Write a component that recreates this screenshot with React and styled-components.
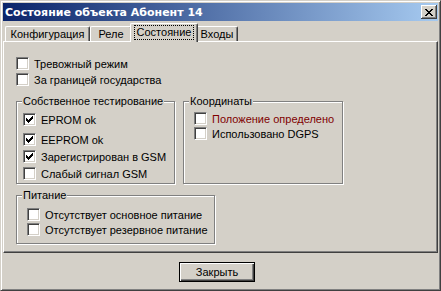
import React from 'react'
import styled, { createGlobalStyle } from 'styled-components'

const GlobalStyle = createGlobalStyle`
  html, body {
    margin: 0;
    padding: 0;
    background: #d4d0c8;
  }
  body {
    font-family: "Liberation Sans", Arial, sans-serif;
    font-size: 11px;
    color: #000;
  }
`

const Window = styled.div`
  width: 441px;
  height: 291px;
  box-sizing: border-box;
  background: #d4d0c8;
  border: 1px solid;
  border-color: #d4d0c8 #404040 #404040 #d4d0c8;
  box-shadow: inset 1px 1px #fff, inset -1px -1px #808080;
  padding: 2px;
  display: flex;
  flex-direction: column;
`

const TitleBar = styled.div`
  height: 18px;
  flex-shrink: 0;
  display: flex;
  align-items: center;
  justify-content: space-between;
  padding: 0 1px 0 2px;
  background: linear-gradient(to right, #0a246a, #a6caf0);
  color: #fff;
  font-family: "DejaVu Sans", "Liberation Sans", sans-serif;
  font-weight: bold;
  font-size: 11px;
`

const CloseBtn = styled.div`
  width: 16px;
  height: 14px;
  box-sizing: border-box;
  background: #d4d0c8;
  box-shadow: inset -1px -1px #404040, inset 1px 1px #fff, inset -2px -2px #808080;
  display: flex;
  align-items: center;
  justify-content: center;
`

const TabRow = styled.div`
  margin-top: 2px;
  height: 18px;
  flex-shrink: 0;
  display: flex;
  align-items: flex-end;
  padding-left: 2px;
`

const Tab = styled.div`
  position: relative;
  box-sizing: border-box;
  width: ${p => p.$w}px;
  height: ${p => (p.$active ? 19 : 15)}px;
  margin: ${p => (p.$active ? '0 -2px -1px -2px' : '0')};
  z-index: ${p => (p.$active ? 2 : 1)};
  background: #d4d0c8;
  border-left: 1px solid #fff;
  border-top: 1px solid #fff;
  border-right: 1px solid #404040;
  border-radius: 2px 2px 0 0;
  box-shadow: inset -1px 0 #808080;
  display: flex;
  align-items: ${p => (p.$active ? 'flex-start' : 'center')};
  justify-content: center;
  padding-top: ${p => (p.$active ? '1px' : '0')};
`

const FocusLabel = styled.span`
  outline: 1px dotted #000;
  padding: 0 2px;
  line-height: 13px;
  margin-top: 1px;
`

const Panel = styled.div`
  height: 212px;
  flex-shrink: 0;
  box-sizing: border-box;
  border: 1px solid;
  border-color: #fff #404040 #404040 #fff;
  box-shadow: inset -1px -1px #808080;
  padding: 15px 0 0 12px;
  display: flex;
  flex-direction: column;
  align-items: flex-start;
`

const Row = styled.div`
  display: flex;
  align-items: center;
  height: 13px;
  gap: 5px;
  margin-top: ${p => p.$mt || 0}px;
  color: ${p => p.$color || '#000'};
  white-space: nowrap;
`

const Box = styled.div`
  width: 13px;
  height: 13px;
  box-sizing: border-box;
  background: #fff;
  border: 1px solid;
  border-color: #808080 #fff #fff #808080;
  box-shadow: inset 1px 1px #404040, inset -1px -1px #d4d0c8;
  flex-shrink: 0;
  display: flex;
  align-items: center;
  justify-content: center;
`

const GroupsRow = styled.div`
  display: flex;
  gap: 8px;
  margin-top: 9px;
`

const Group = styled.fieldset`
  margin: ${p => p.$mt || 0}px 0 0 0;
  padding: 0;
  width: ${p => p.$w}px;
  height: ${p => p.$h}px;
  box-sizing: border-box;
  min-width: 0;
  border: 1px solid #808080;
  box-shadow: 1px 1px #fff, inset 1px 1px #fff;
`

const Legend = styled.legend`
  padding: 0 1px;
  margin-left: 5px;
  line-height: 13px;
  background: #d4d0c8;
`

const Items = styled.div`
  display: flex;
  flex-direction: column;
  align-items: flex-start;
  padding: ${p => p.$pt}px 0 0 ${p => p.$pl}px;
`

const Footer = styled.div`
  flex: 1;
  padding: 9px 0 0 176px;
`

const Button = styled.button`
  width: 76px;
  height: 20px;
  box-sizing: border-box;
  margin: 0;
  padding: 0;
  font: inherit;
  color: #000;
  background: #d4d0c8;
  border: 1px solid #000;
  box-shadow: inset 1px 1px #fff, inset -1px -1px #404040, inset -2px -2px #808080;
`

const Check = () => (
  <svg width="7" height="7" viewBox="0 0 7 7" shapeRendering="crispEdges">
    {[2, 3, 4, 3, 2, 1, 0].map((y, x) => (
      <rect key={x} x={x} y={y} width="1" height="3" fill="#000" />
    ))}
  </svg>
)

const CheckItem = ({ checked, children, mt, color }) => (
  <Row $mt={mt} $color={color}>
    <Box>{checked && <Check />}</Box>
    <span>{children}</span>
  </Row>
)

export default function App() {
  return (
    <>
      <GlobalStyle />
      <Window>
        <TitleBar>
          <span>Состояние объекта Абонент 14</span>
          <CloseBtn>
            <svg width="8" height="7" viewBox="0 0 8 7" shapeRendering="crispEdges">
              <path d="M0 0h2v1H0zM6 0h2v1H6zM1 1h2v1H1zM5 1h2v1H5zM2 2h4v1H2zM3 3h2v1H3zM2 4h4v1H2zM1 5h2v1H1zM5 5h2v1H5zM0 6h2v1H0zM6 6h2v1H6z" fill="#000" />
            </svg>
          </CloseBtn>
        </TitleBar>

        <TabRow>
          <Tab $w={85}>Конфигурация</Tab>
          <Tab $w={42}>Реле</Tab>
          <Tab $w={68} $active>
            <FocusLabel>Состояние</FocusLabel>
          </Tab>
          <Tab $w={42}>Входы</Tab>
        </TabRow>

        <Panel>
          <CheckItem>Тревожный режим</CheckItem>
          <CheckItem mt={3}>За границей государства</CheckItem>

          <GroupsRow>
            <Group $w={159} $h={89}>
              <Legend>Собственное тестирование</Legend>
              <Items $pt={5} $pl={6}>
                <CheckItem checked>EPROM ok</CheckItem>
                <CheckItem checked mt={7}>EEPROM ok</CheckItem>
                <CheckItem checked mt={4}>Зарегистрирован в GSM</CheckItem>
                <CheckItem mt={4}>Слабый сигнал GSM</CheckItem>
              </Items>
            </Group>
            <Group $w={160} $h={89}>
              <Legend>Координаты</Legend>
              <Items $pt={4} $pl={10}>
                <CheckItem color="#800000">Положение определено</CheckItem>
                <CheckItem mt={2}>Использовано DGPS</CheckItem>
              </Items>
            </Group>
          </GroupsRow>

          <Group $mt={5} $w={199} $h={55}>
            <Legend>Питание</Legend>
            <Items $pt={6} $pl={10}>
              <CheckItem>Отсутствует основное питание</CheckItem>
              <CheckItem mt={2}>Отсутствует резервное питание</CheckItem>
            </Items>
          </Group>
        </Panel>

        <Footer>
          <Button>Закрыть</Button>
        </Footer>
      </Window>
    </>
  )
}
